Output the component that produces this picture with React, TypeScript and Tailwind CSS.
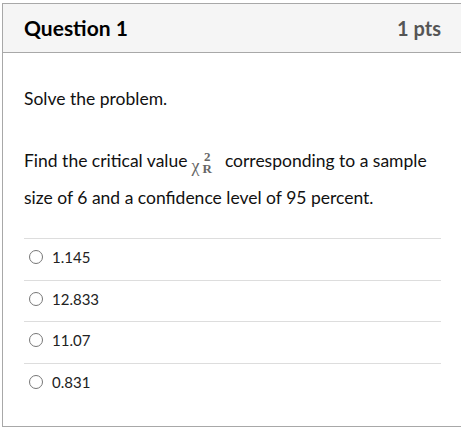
export default function App() {
  const answers = ["1.145", "12.833", "11.07", "0.831"];
  return (
    <div className="w-[461px] h-[440px] overflow-hidden bg-white pt-[3px] pl-[2px] font-['Lato','Liberation_Sans',sans-serif] text-[#2d3b45]">
      <div className="w-[462px] border border-[#a8a8a8]">
        <div className="h-[49px] bg-[#f5f5f5] border-b border-[#a8a8a8] flex items-center justify-between pl-[21px] pr-[22px]">
          <span className="text-[21px] font-bold text-[#000]">Question 1</span>
          <span className="text-[20px] font-bold text-[#555]">1 pts</span>
        </div>
        <div className="px-[21px] pr-[22px] pt-[33px] pb-[22px]">
          <p className="text-[17.5px] leading-[26px] text-[#111]">Solve the problem.</p>
          <p className="mt-[30px] text-[17.5px] leading-[37px] text-[#111]">
            Find the critical value
            <span className="inline-flex items-center align-middle ml-[4px] mr-[13px] font-['Liberation_Serif',serif] text-[#666]">
              <span className="text-[18px] leading-none mt-[7px]">χ</span>
              <span className="inline-flex flex-col items-center ml-[3px] text-[13px] leading-[12px] font-bold">
                <span>2</span>
                <span>R</span>
              </span>
            </span>
            corresponding to a sample size of 6 and a confidence level of 95 percent.
          </p>
          <div className="mt-[22px]">
            {answers.map(a => (
              <div key={a} className="h-[41.6px] border-t border-[#ddd] flex items-center pl-[5px] pb-[4px]">
                <span className="w-[14px] h-[14px] rounded-full border border-[#777] mr-[9px]" />
                <span className="text-[15px] text-[#222]">{a}</span>
              </div>
            ))}
          </div>
        </div>
      </div>
    </div>
  );
}
